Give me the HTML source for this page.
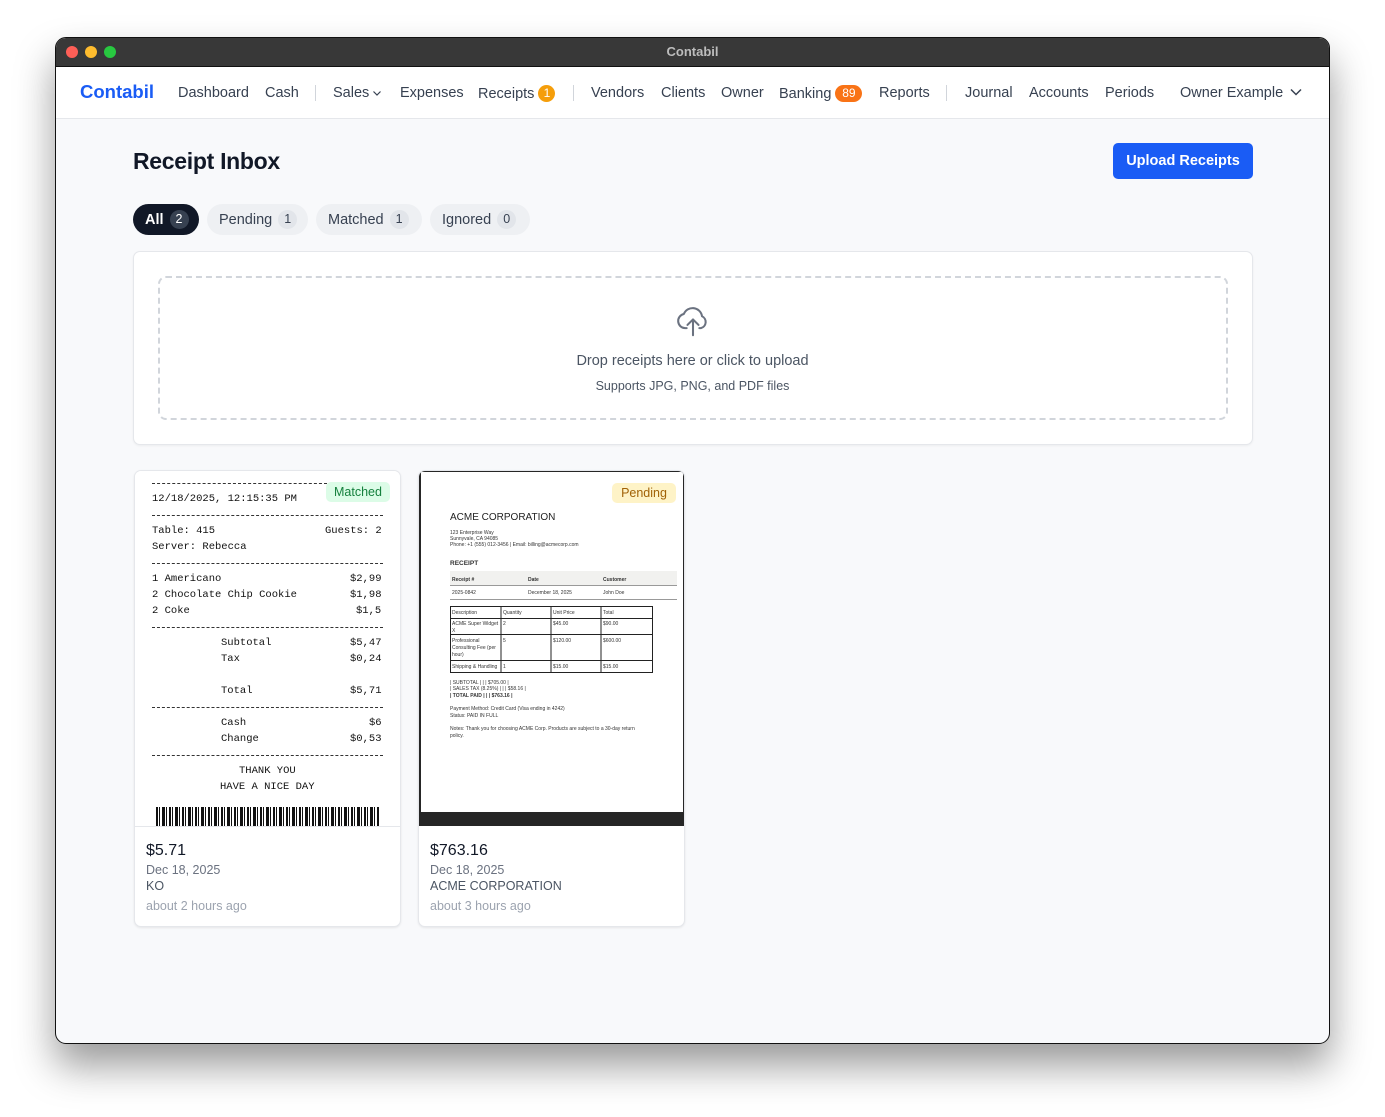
<!DOCTYPE html>
<html><head><meta charset="utf-8"><style>
*{box-sizing:border-box;margin:0;padding:0}
body{width:1385px;height:1117px;background:#fff;font-family:"Liberation Sans",sans-serif;position:relative;overflow:hidden}
.a{position:absolute;white-space:nowrap}
#win{position:absolute;left:55px;top:37px;width:1275px;height:1007px;border-radius:11px;background:#f8f9fb;border:1px solid #111;box-shadow:0 22px 40px rgba(0,0,0,.4);overflow:hidden}
.nav{font-size:14.5px;color:#374151;top:47px}
.sep{position:absolute;top:47px;width:1px;height:16px;background:#d1d5db}
.bdg{display:inline-block;color:#fff;font-size:12px;border-radius:9px;height:17px;line-height:17px;text-align:center;vertical-align:1px}
.tab{position:absolute;top:166px;height:31px;border-radius:16px;background:#eef0f3;font-size:14.5px;color:#374151;line-height:31px;padding-left:12px}
.tab i{font-style:normal;display:inline-block;width:19px;height:19px;border-radius:10px;background:#e2e5ea;text-align:center;line-height:19px;font-size:12.5px;margin-left:6px;vertical-align:1px}
.card{position:absolute;top:432px;width:267px;height:457px;background:#fff;border:1px solid #e5e7eb;border-radius:7px;box-shadow:0 1px 2px rgba(0,0,0,.08);overflow:hidden}
.m{font-family:"Liberation Mono",monospace;font-size:10.5px;color:#111;position:absolute;white-space:pre}
.dash{position:absolute;left:17px;width:231px;border-top:1px dashed #333}
.t{font-size:5px;color:#333;position:absolute;white-space:nowrap}
</style></head><body>
<div id="win">
<div style="position:absolute;left:0;top:0;width:100%;height:29px;background:#383838;border-bottom:1px solid #111"></div>
<div class="a" style="left:10px;top:8px;width:12px;height:12px;border-radius:6px;background:#fe5f57"></div>
<div class="a" style="left:29px;top:8px;width:12px;height:12px;border-radius:6px;background:#febc2e"></div>
<div class="a" style="left:48px;top:8px;width:12px;height:12px;border-radius:6px;background:#28c840"></div>
<div class="a" style="left:0;width:100%;text-align:center;top:6px;font-size:13px;font-weight:bold;color:#bdbdbd">Contabil</div>
<div style="position:absolute;left:0;top:29px;width:100%;height:52px;background:#fff;border-bottom:1px solid #e5e7eb"></div>
<div class="a" style="left:24px;top:43px;font-size:18.5px;font-weight:bold;color:#1a5cf5">Contabil</div>
<div class="a nav" style="left:122px">Dashboard</div>
<div class="a nav" style="left:209px">Cash</div>
<div class="sep" style="left:259px"></div>
<div class="a nav" style="left:277px">Sales</div>
<svg class="a" style="left:316px;top:51px" width="10" height="8" viewBox="0 0 10 8"><path d="M1.5 2.5l3.5 3.5 3.5-3.5" fill="none" stroke="#374151" stroke-width="1.2"/></svg>
<div class="a nav" style="left:344px">Expenses</div>
<div class="a nav" style="left:422px">Receipts <span class="bdg" style="background:#f59e0b;width:17px">1</span></div>
<div class="sep" style="left:517px"></div>
<div class="a nav" style="left:535px">Vendors</div>
<div class="a nav" style="left:605px">Clients</div>
<div class="a nav" style="left:665px">Owner</div>
<div class="a nav" style="left:723px">Banking <span class="bdg" style="background:#f97316;width:27px">89</span></div>
<div class="a nav" style="left:823px">Reports</div>
<div class="sep" style="left:890px"></div>
<div class="a nav" style="left:909px">Journal</div>
<div class="a nav" style="left:973px">Accounts</div>
<div class="a nav" style="left:1049px">Periods</div>
<div class="a nav" style="left:1124px">Owner Example</div>
<svg class="a" style="left:1234px;top:49px" width="12" height="10" viewBox="0 0 12 10"><path d="M1 2.5l5 5 5-5" fill="none" stroke="#374151" stroke-width="1.5"/></svg>

<div class="a" style="left:77px;top:110px;font-size:23px;font-weight:bold;color:#111827;letter-spacing:-.3px">Receipt Inbox</div>
<div class="a" style="left:1057px;top:105px;width:140px;height:36px;border-radius:5px;background:#1a5cf5;color:#fff;font-size:14.5px;font-weight:bold;text-align:center;line-height:37px">Upload Receipts</div>

<div class="tab" style="left:77px;width:66px;background:#111827;color:#fff;font-weight:bold;line-height:32px">All<i style="background:#374151;color:#fff;font-weight:normal">2</i></div>
<div class="tab" style="left:151px;width:101px;line-height:32px">Pending<i>1</i></div>
<div class="tab" style="left:260px;width:106px;line-height:32px">Matched<i>1</i></div>
<div class="tab" style="left:374px;width:100px;line-height:32px">Ignored<i>0</i></div>

<div style="position:absolute;left:77px;top:213px;width:1120px;height:194px;background:#fff;border:1px solid #e5e7eb;border-radius:7px;box-shadow:0 1px 2px rgba(0,0,0,.05)"></div>
<div style="position:absolute;left:102px;top:238px;width:1070px;height:144px;border:2px dashed #d1d5db;border-radius:8px"></div>
<svg class="a" style="left:618px;top:264px" width="38" height="38" viewBox="0 0 24 24" fill="none" stroke="#6b7280" stroke-width="1.3" stroke-linecap="round" stroke-linejoin="round"><path d="M8 16.5H7a4.5 4.5 0 0 1-.8-8.9A6 6 0 0 1 17.7 9 4 4 0 0 1 17 16.5h-1"/><path d="M12 21V11M8.5 14.5 12 11l3.5 3.5"/></svg>
<div class="a" style="left:0;width:1273px;text-align:center;top:315px;font-size:14.5px;color:#4b5563">Drop receipts here or click to upload</div>
<div class="a" style="left:0;width:1273px;text-align:center;top:341px;font-size:12.5px;color:#4b5563">Supports JPG, PNG, and PDF files</div>

<!-- card 1 -->
<div class="card" style="left:78px">
 <div style="position:absolute;left:0;top:0;width:100%;height:355px;background:#fff;overflow:hidden">
  <div class="m" style="left:17px;top:-8px">Business details</div>
  <div class="dash" style="top:12px;width:175px"></div>
  <div class="m" style="left:17px;top:22px">12/18/2025, 12:15:35 PM</div>
  <div class="dash" style="top:44px"></div>
  <div class="m" style="left:17px;top:54px">Table: 415</div><div class="m" style="left:190px;top:54px">Guests: 2</div>
  <div class="m" style="left:17px;top:70px">Server: Rebecca</div>
  <div class="dash" style="top:92px"></div>
  <div class="m" style="left:17px;top:102px">1 Americano</div><div class="m" style="left:215px;top:102px">$2,99</div>
  <div class="m" style="left:17px;top:118px">2 Chocolate Chip Cookie</div><div class="m" style="left:215px;top:118px">$1,98</div>
  <div class="m" style="left:17px;top:134px">2 Coke</div><div class="m" style="left:221px;top:134px">$1,5</div>
  <div class="dash" style="top:156px"></div>
  <div class="m" style="left:86px;top:166px">Subtotal</div><div class="m" style="left:215px;top:166px">$5,47</div>
  <div class="m" style="left:86px;top:182px">Tax</div><div class="m" style="left:215px;top:182px">$0,24</div>
  <div class="m" style="left:86px;top:214px">Total</div><div class="m" style="left:215px;top:214px">$5,71</div>
  <div class="dash" style="top:236px"></div>
  <div class="m" style="left:86px;top:246px">Cash</div><div class="m" style="left:234px;top:246px">$6</div>
  <div class="m" style="left:86px;top:262px">Change</div><div class="m" style="left:215px;top:262px">$0,53</div>
  <div class="dash" style="top:284px"></div>
  <div class="m" style="left:104px;top:294px">THANK YOU</div>
  <div class="m" style="left:85px;top:310px">HAVE A NICE DAY</div>
  <div style="position:absolute;left:21px;top:336px;width:223px;height:19px;background:repeating-linear-gradient(90deg,#111 0 2px,#fff 2px 3px,#111 3px 4px,#fff 4px 6px,#111 6px 9px,#fff 9px 10px,#111 10px 11px,#fff 11px 13px)"></div>
  <div class="a" style="left:191px;top:11px;width:64px;height:20px;border-radius:5px;background:#dcfce7;color:#15803d;font-size:12.5px;text-align:center;line-height:20px">Matched</div>
 </div>
 <div style="position:absolute;left:0;top:355px;width:100%;border-top:1px solid #e5e7eb"></div>
 <div class="a" style="left:11px;top:371px;font-size:16px;color:#111827">$5.71</div>
 <div class="a" style="left:11px;top:392px;font-size:12.5px;color:#6b7280">Dec 18, 2025</div>
 <div class="a" style="left:11px;top:408px;font-size:12.5px;color:#4b5563">KO</div>
 <div class="a" style="left:11px;top:428px;font-size:12.5px;color:#9ca3af">about 2 hours ago</div>
</div>

<!-- card 2 -->
<div class="card" style="left:362px">
 <div style="position:absolute;left:0;top:0;width:100%;height:355px;background:#262626">
  <div style="position:absolute;left:2px;top:1px;width:262px;height:340px;background:#fff">
   <div class="a" style="left:191px;top:11px;width:64px;height:20px;border-radius:5px;background:#fef3c7;color:#a16207;font-size:12.5px;text-align:center;line-height:20px">Pending</div>
   <div class="a" style="left:29px;top:40px;font-size:10px;color:#222">ACME CORPORATION</div>
   <div class="t" style="left:29px;top:58px">123 Enterprise Way</div>
   <div class="t" style="left:29px;top:64px">Sunnyvale, CA 94085</div>
   <div class="t" style="left:29px;top:70px">Phone: +1 (555) 012-3456 | Email: billing@acmecorp.com</div>
   <div class="t" style="left:29px;top:88px;font-size:6.5px;font-weight:bold">RECEIPT</div>
   <div style="position:absolute;left:29px;top:99px;width:227px;height:15px;background:#f1f1ef;border-bottom:1px solid #999"></div>
   <div class="t" style="left:31px;top:105px;font-weight:bold">Receipt #</div><div class="t" style="left:107px;top:105px;font-weight:bold">Date</div><div class="t" style="left:182px;top:105px;font-weight:bold">Customer</div>
   <div class="t" style="left:31px;top:118px">2025-0842</div><div class="t" style="left:107px;top:118px">December 18, 2025</div><div class="t" style="left:182px;top:118px">John Doe</div>
   <div style="position:absolute;left:29px;top:127px;width:227px;border-top:1px solid #999"></div>
   <svg style="position:absolute;left:29px;top:134px" width="204" height="68"><g fill="none" stroke="#222" stroke-width="1"><rect x=".5" y=".5" width="202" height="66"/><path d="M51 0v67M101 0v67M151 0v67M0 12.5h203M0 28.5h203M0 54.5h203"/></g></svg>
   <div class="t" style="left:31px;top:138px">Description</div><div class="t" style="left:82px;top:138px">Quantity</div><div class="t" style="left:132px;top:138px">Unit Price</div><div class="t" style="left:182px;top:138px">Total</div>
   <div class="t" style="left:31px;top:149px">ACME Super Widget</div><div class="t" style="left:31px;top:156px">X</div><div class="t" style="left:82px;top:149px">2</div><div class="t" style="left:132px;top:149px">$45.00</div><div class="t" style="left:182px;top:149px">$90.00</div>
   <div class="t" style="left:31px;top:166px">Professional</div><div class="t" style="left:31px;top:173px">Consulting Fee (per</div><div class="t" style="left:31px;top:180px">hour)</div><div class="t" style="left:82px;top:166px">5</div><div class="t" style="left:132px;top:166px">$120.00</div><div class="t" style="left:182px;top:166px">$600.00</div>
   <div class="t" style="left:31px;top:192px">Shipping &amp; Handling</div><div class="t" style="left:82px;top:192px">1</div><div class="t" style="left:132px;top:192px">$15.00</div><div class="t" style="left:182px;top:192px">$15.00</div>
   <div class="t" style="left:29px;top:208px">| SUBTOTAL | | | $705.00 |</div>
   <div class="t" style="left:29px;top:214px">| SALES TAX (8.25%) | | | $58.16 |</div>
   <div class="t" style="left:29px;top:221px;font-weight:bold">| TOTAL PAID | | | $763.16 |</div>
   <div class="t" style="left:29px;top:234px">Payment Method: Credit Card (Visa ending in 4242)</div>
   <div class="t" style="left:29px;top:241px">Status: PAID IN FULL</div>
   <div class="t" style="left:29px;top:254px">Notes: Thank you for choosing ACME Corp. Products are subject to a 30-day return</div>
   <div class="t" style="left:29px;top:261px">policy.</div>
  </div>
 </div>
 <div class="a" style="left:11px;top:371px;font-size:16px;color:#111827">$763.16</div>
 <div class="a" style="left:11px;top:392px;font-size:12.5px;color:#6b7280">Dec 18, 2025</div>
 <div class="a" style="left:11px;top:408px;font-size:12.5px;color:#4b5563">ACME CORPORATION</div>
 <div class="a" style="left:11px;top:428px;font-size:12.5px;color:#9ca3af">about 3 hours ago</div>
</div>
</div>
</body></html>
